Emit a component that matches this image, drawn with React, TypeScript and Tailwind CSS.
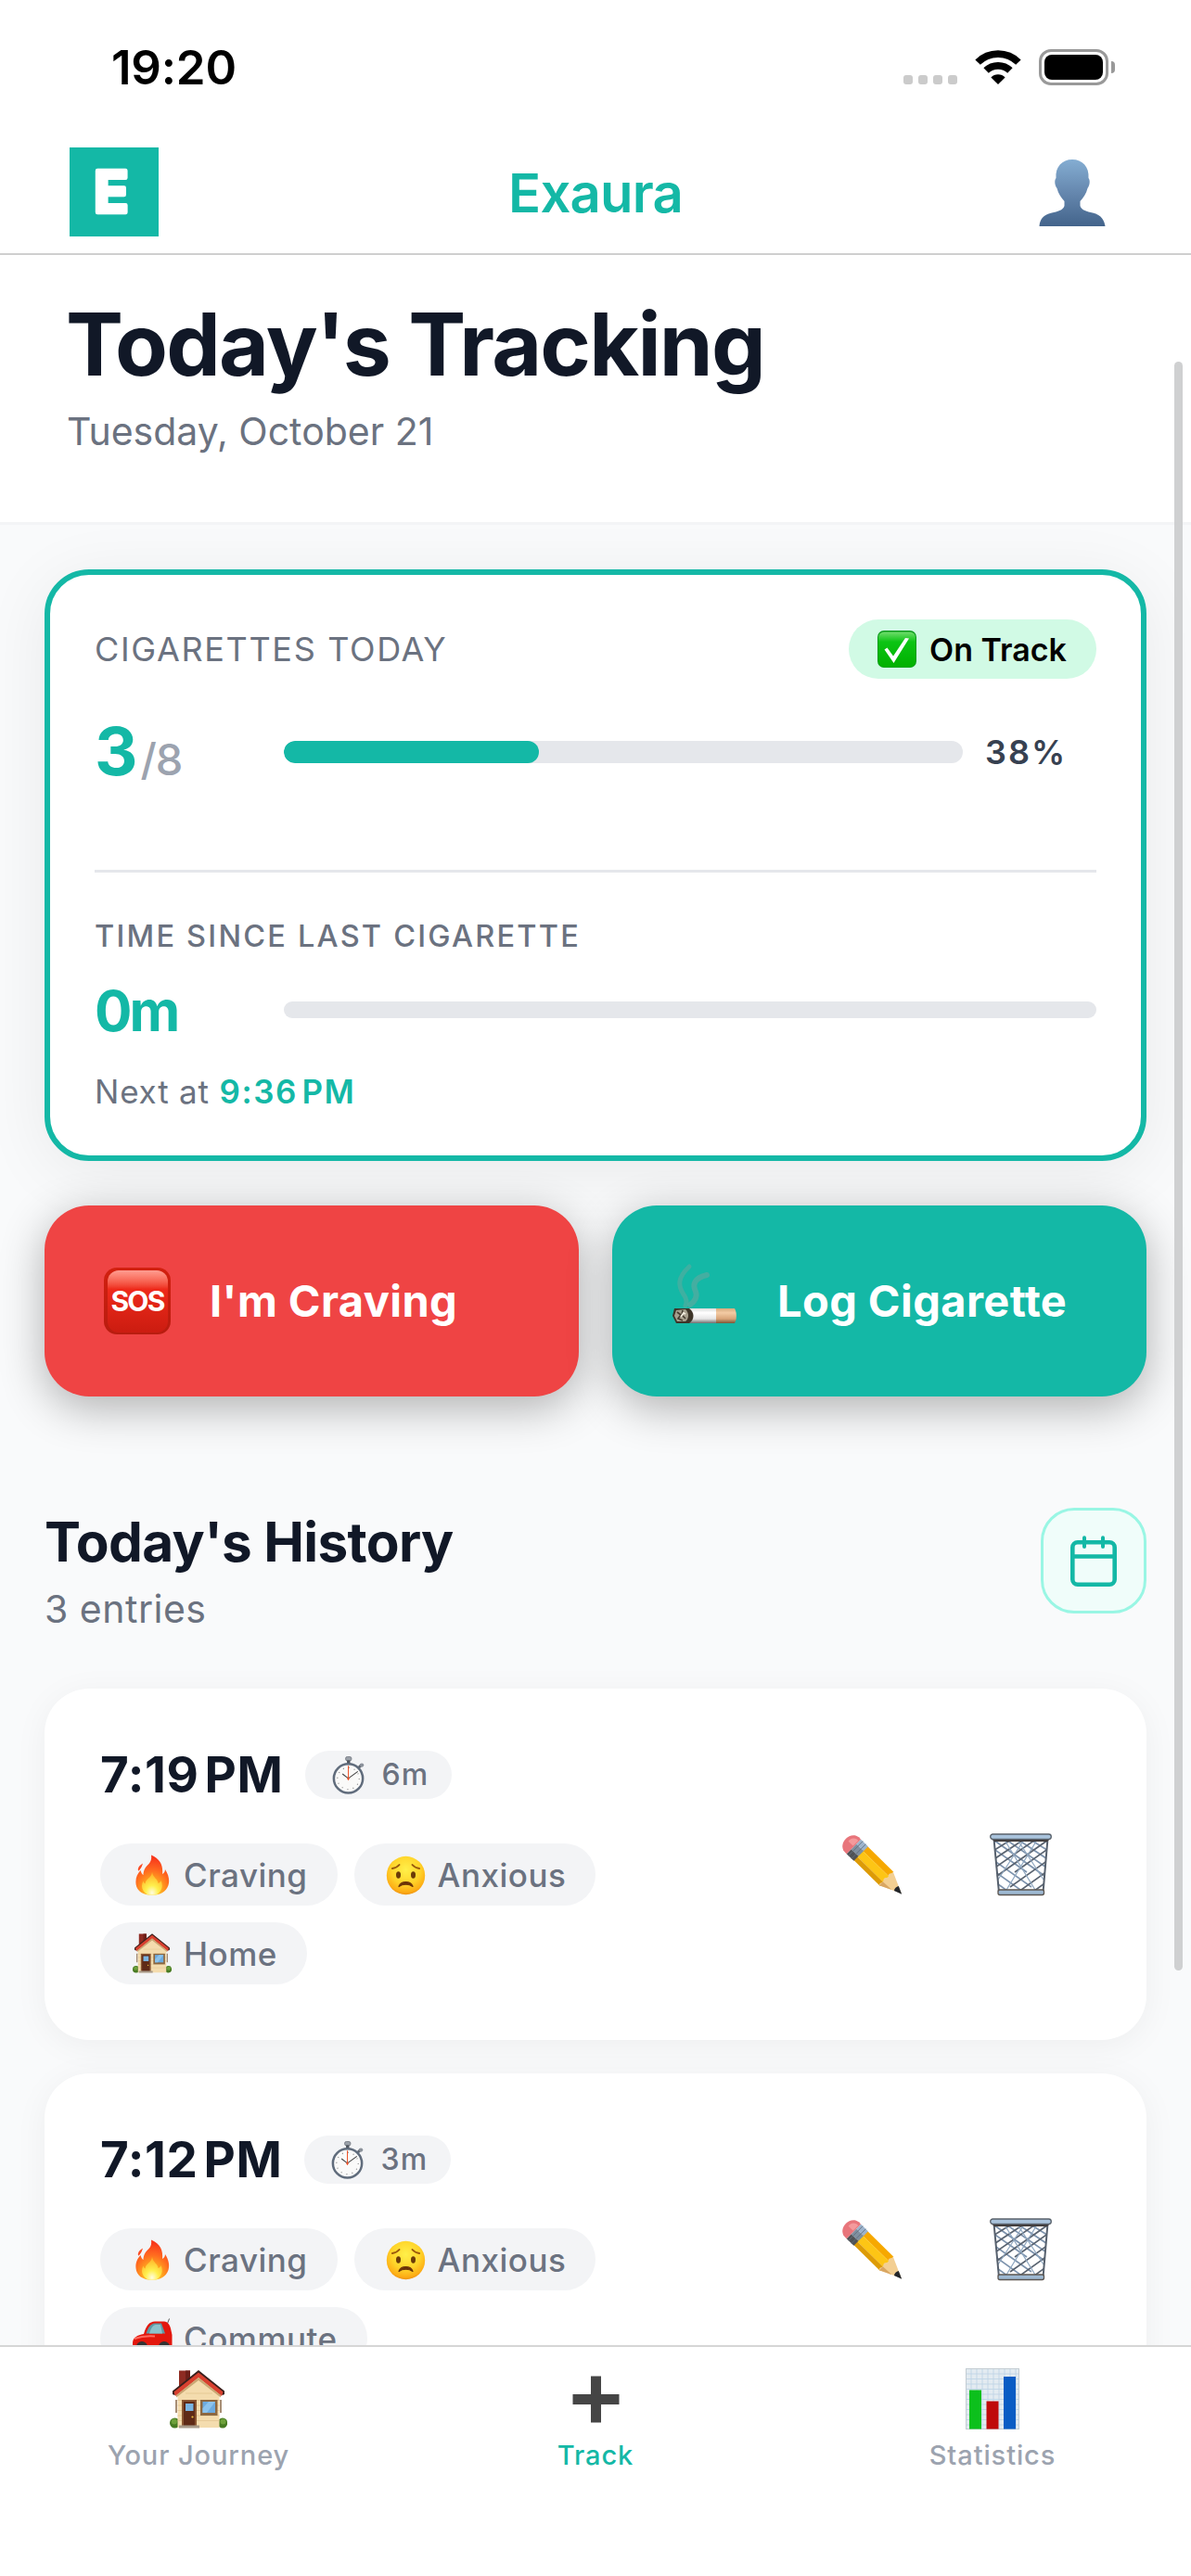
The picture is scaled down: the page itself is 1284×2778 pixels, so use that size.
import React from "react";

type IconProps = { className?: string };

function WifiIcon() {
  return (
    <svg viewBox="0 0 50 37" className="h-[37px] w-[50px]" fill="none" stroke="#000">
      <path d="M3.1 13.1A31 31 0 0 1 46.9 13.1" strokeWidth="7.7" />
      <path d="M12.1 22.1A18.3 18.3 0 0 1 37.9 22.1" strokeWidth="7.7" />
      <path d="M17.4 29.4A10.5 10.5 0 0 1 32.6 29.4L25 37Z" fill="#000" stroke="none" />
    </svg>
  );
}

function PersonIcon() {
  return (
    <svg viewBox="0 0 72 72" className="h-[72px] w-[72px]">
      <defs>
        <linearGradient id="person" x1="0" y1="0" x2="0" y2="1">
          <stop offset="0" stopColor="#84add2" />
          <stop offset="0.5" stopColor="#6587ae" />
          <stop offset="1" stopColor="#43648b" />
        </linearGradient>
      </defs>
      <path
        fill="url(#person)"
        d="M36 0C47 0 54.500 8 53.500 20C55.500 22 55 28 52.500 31C51 37 48 41 44.500 45L44.500 50C46 55 52 56 58 57.500C68 60 70.500 66 71.500 72L0.500 72C1 65 4 60 14 57.500C20 56 26 55 27.500 50L27.500 45C24 41 21 37 19.500 31C17 28 16.500 22 18.500 20C17.500 8 25 0 36 0Z"
      />
    </svg>
  );
}

function CheckIcon() {
  return (
    <svg viewBox="0 0 42 40" className="h-[40px] w-[42px]">
      <defs>
        <linearGradient id="check" x1="0" y1="0" x2="0" y2="1">
          <stop offset="0" stopColor="#6fdc6c" />
          <stop offset="0.28" stopColor="#0cc414" />
          <stop offset="1" stopColor="#00b000" />
        </linearGradient>
      </defs>
      <rect width="42" height="40" rx="7" fill="#0c9a1c" />
      <rect x="1" y="1.500" width="40" height="38" rx="6" fill="url(#check)" />
      <path d="M7.500 20.500L10.500 18.500L17 27.500L30 8L34 8.500L17.500 35Z" fill="#fff" />
    </svg>
  );
}

function SosIcon() {
  return (
    <span className="flex h-[72px] w-[72px] items-center justify-center rounded-[14px] bg-linear-to-b from-[#d2200f] to-[#b81c0f]">
      <span className="flex h-[67px] w-[65px] items-center justify-center rounded-[12px] bg-linear-to-b from-[#ff9c90] via-[#ee2a1b] via-30% to-[#cb1c10] text-[30px] leading-[40px] font-bold tracking-[-1.8px] text-white">
        SOS
      </span>
    </span>
  );
}

function CigaretteIcon() {
  return (
    <svg viewBox="0 0 72 72" className="h-[72px] w-[72px]">
      <defs>
        <linearGradient id="paper" x1="0" y1="0" x2="0" y2="1">
          <stop offset="0" stopColor="#dcdcdc" />
          <stop offset="0.3" stopColor="#ffffff" />
          <stop offset="0.7" stopColor="#e6e6e6" />
          <stop offset="1" stopColor="#6d6d6d" />
        </linearGradient>
        <linearGradient id="filter" x1="0" y1="0" x2="0" y2="1">
          <stop offset="0" stopColor="#d9a97c" />
          <stop offset="0.3" stopColor="#f3cba4" />
          <stop offset="0.7" stopColor="#d9a579" />
          <stop offset="1" stopColor="#7a5638" />
        </linearGradient>
      </defs>
      <g fill="none" stroke="#6aa89e" strokeLinecap="round" opacity="0.7">
        <path d="M19 6C6 18 7 27 13 36C16 40 17 44 15 48" strokeWidth="5" opacity="0.7" />
        <path d="M38 15C25 18 22 25 26 33C28 38 25 44 20 47" strokeWidth="6" opacity="0.8" />
      </g>
      <rect x="18" y="51" width="30" height="16" fill="url(#paper)" />
      <path d="M48 51H68C70.500 55 70.500 63 68 67H48Z" fill="url(#filter)" />
      <path d="M3 51L19 51C25 55 25 63 19 67L5 67L1 59Z" fill="#3d3428" />
      <path d="M5 53L15 52C19 56 19 62 15 65L6 65L3 59Z" fill="#a79f8e" />
      <path d="M6 55l4 3-3 4 5 2M12 53l-1 5 4 4" stroke="#453c30" strokeWidth="1.600" fill="none" />
      <path d="M10 60l3-4 2 1" stroke="#f3eee0" strokeWidth="1.800" fill="none" />
    </svg>
  );
}

function CalendarIcon() {
  return (
    <svg viewBox="0 0 50 55" className="h-[55px] w-[50px]" fill="none" stroke="#14b8a6" strokeWidth="4.600" strokeLinecap="round">
      <rect x="2.300" y="7.300" width="45.400" height="45.400" rx="5.500" />
      <path d="M15 2.300V12M35 2.300V12" strokeWidth="4" />
      <path d="M3 22.500H47" strokeLinecap="butt" />
    </svg>
  );
}

function StopwatchIcon() {
  return (
    <svg viewBox="0 0 36 42" className="h-[41px] w-[36px] shrink-0">
      <rect x="14.500" y="0.500" width="6.500" height="4.500" rx="1.800" fill="#9aa0a8" stroke="#6d737c" strokeWidth="0.800" />
      <rect x="16" y="4.500" width="3.500" height="4.500" fill="#4f555e" />
      <path d="M29 12.500L32.500 9" stroke="#5f6670" strokeWidth="3" />
      <circle cx="32.500" cy="9.800" r="2.200" fill="#8b929b" />
      <circle cx="17.500" cy="24.500" r="16" fill="#fafaf9" stroke="#606c7c" strokeWidth="2.600" />
      <circle cx="17.500" cy="24.500" r="12" fill="none" stroke="#8a8a8a" strokeWidth="1.300" strokeDasharray="1 5.280" />
      <path d="M17.500 24.500L11 19.500M17.500 24.500L28 16.800" stroke="#444" strokeWidth="1.100" />
      <path d="M17.500 10.500V26.500" stroke="#f0562c" strokeWidth="1.100" />
      <circle cx="17.500" cy="24.500" r="1.300" fill="#e8532b" />
    </svg>
  );
}

function FireIcon() {
  return (
    <svg viewBox="0 0 44 44" className="h-[44px] w-[44px]">
      <defs>
        <radialGradient id="fire" cx="0.5" cy="0.92" r="0.85">
          <stop offset="0" stopColor="#ffd93b" />
          <stop offset="0.35" stopColor="#ffa51f" />
          <stop offset="0.65" stopColor="#ff6a1f" />
          <stop offset="1" stopColor="#f8371c" />
        </radialGradient>
        <radialGradient id="flame" cx="0.5" cy="0.9" r="0.8">
          <stop offset="0" stopColor="#fffce0" />
          <stop offset="0.4" stopColor="#fff04d" />
          <stop offset="1" stopColor="#ffb52a" />
        </radialGradient>
      </defs>
      <path fill="url(#fire)" d="M21 0.500C31 5 34 12 33 21C35 20 36 18 36 16C40 22 41 28 39.500 33C37 40 31 43.800 22 43.800C12 43.800 5 39 4.500 31C4 25 6 21 9.500 17C10.500 20 11 21 12.500 22C12.500 17 15 13 18.500 10C21 7.500 21.500 4 21 0.500Z" />
      <path fill="#fa4a22" d="M12 9.500C11 12.500 10.500 14 8.500 16.500C7 18.500 6.800 17 6.800 15.500C7.500 12.500 9.500 11 12 9.500Z" />
      <path fill="url(#flame)" d="M22 19C23 25 28 26 28.500 31C30 30.500 31 29.500 31.500 28C34.500 34 32 40 27 43.200Q22 44.200 17 43.200C11 39.500 9.500 34 12.500 28.500C13 30.500 13.500 31 14.500 31.500C15 26 21.500 25 22 19Z" />
    </svg>
  );
}

function AnxiousIcon() {
  return (
    <svg viewBox="0 0 44 44" className="h-[44px] w-[44px]">
      <defs>
        <radialGradient id="face" cx="0.5" cy="0.35" r="0.68">
          <stop offset="0" stopColor="#fff04a" />
          <stop offset="0.55" stopColor="#ffd42a" />
          <stop offset="0.85" stopColor="#fdae16" />
          <stop offset="1" stopColor="#ea8a10" />
        </radialGradient>
      </defs>
      <circle cx="21.500" cy="22.500" r="20.700" fill="url(#face)" />
      <ellipse cx="13.500" cy="22" rx="2.500" ry="3.700" fill="#6b3b08" />
      <ellipse cx="29.500" cy="22" rx="2.500" ry="3.700" fill="#6b3b08" />
      <path d="M7 15C10 14.500 12.500 13.500 14.500 11M36 15C33 14.500 30.500 13.500 28.500 11" stroke="#9a5a0d" strokeWidth="2" strokeLinecap="round" fill="none" />
      <path d="M14 34.500C16 28 27 28 29 34.500C25 31.500 18 31.500 14 34.500Z" fill="#6b3408" stroke="#6b3408" strokeWidth="1.200" strokeLinejoin="round" />
    </svg>
  );
}

function HouseIcon({ className = "mx-px h-[43px] w-[42px]" }: IconProps) {
  return (
    <svg viewBox="0 0 62 63" className={className}>
      <ellipse cx="5.500" cy="57" rx="5.500" ry="5.500" fill="#477a22" />
      <ellipse cx="57" cy="57" rx="5.200" ry="5.500" fill="#477a22" />
      <ellipse cx="4.800" cy="55.500" rx="3" ry="3" fill="#6da03a" />
      <ellipse cx="57.500" cy="55.500" rx="3" ry="3" fill="#6da03a" />
      <path d="M10 0.500H22V16L10 25Z" fill="#8e2b22" />
      <path d="M17 0.500H22V14L17 18Z" fill="#6d1f19" />
      <path d="M8.500 25L31 5L53.500 25V62H8.500Z" fill="#f4dcae" />
      <path d="M8.500 32.500H53.500M8.500 38H53.500M8.500 43.500H53.500M8.500 49H53.500M8.500 54.500H53.500M17 25H46" stroke="#e2c591" strokeWidth="0.800" />
      <path d="M31 0L59 22.500V26L57 27L31 5.500L5 27L3 26V22.500Z" fill="#3a1f1c" />
      <path d="M31 2.500L57.500 23.500L56 28L31 8L6 28L4.500 23.500Z" fill="#d8402f" />
      <path d="M31 8L55 27V29.500L31 11L7 29.500V27Z" fill="#c9a774" />
      <rect x="13" y="32" width="16" height="28" fill="#8a5632" />
      <rect x="15" y="34" width="12" height="26" fill="#5f2a17" />
      <rect x="17" y="36" width="8.500" height="8" fill="#7ab4e2" />
      <circle cx="24.500" cy="50.500" r="1.100" fill="#f0c23e" />
      <rect x="33" y="32" width="18.500" height="17" fill="#8c6740" />
      <rect x="35.500" y="34" width="13.500" height="12" fill="#6cabe0" />
      <path d="M35.500 41L42 34H49L40 46H35.500Z" fill="#8cc3ec" />
      <path d="M7 32V46M55 32V46" stroke="#8a6a48" strokeWidth="1.500" />
      <rect x="10" y="59.500" width="22" height="3" fill="#a89a8a" />
    </svg>
  );
}

function CarIcon() {
  return (
    <svg viewBox="0 0 44 44" className="h-[44px] w-[44px]">
      <path d="M38 7L40.500 0.500" stroke="#555" strokeWidth="1" />
      <path d="M13 17C16 7 19 4 25 3.500H35C39 4 41 7 42 11L43.500 18V31H1V27C1 21 6 18 13 17Z" fill="#e3170d" />
      <path d="M15.500 16.500C18 9 20.500 6 25 5.500H32L36 16.500Z" fill="#5f9aa5" />
      <path d="M19 16.500C21 10 23 7.500 26 7L31 7L33 16.500Z" fill="#8cc2cc" />
      <path d="M3 22C10 19.500 18 19 25 19.500" stroke="#ff6a5e" strokeWidth="2" fill="none" />
      <circle cx="11" cy="31" r="6" fill="#333" />
      <circle cx="35" cy="31" r="6" fill="#333" />
    </svg>
  );
}

function PencilIcon() {
  return (
    <svg viewBox="0 0 64 64" className="h-[64px] w-[64px] overflow-visible">
      <g transform="translate(9.500 9.500) rotate(44.500)">
        <path d="M13 -10.500H54V-3.500H13Z" fill="#f6a800" />
        <path d="M13 -3.500H54V5H13Z" fill="#fdc515" />
        <path d="M13 5H54V10.500H13Z" fill="#dd9b06" />
        <path d="M53 -10.500L76 0L53 10.500C50 8 55 6 52 3C50 0 56 -2 52.500 -4C50.500 -7 55 -8 53 -10.500Z" fill="#f3cf92" />
        <path d="M53 5L66 4.500L53 10.500Z" fill="#d9a662" />
        <path d="M68.500 -3.500L77 0.300L68.500 3.500C67 1 67 -1 68.500 -3.500Z" fill="#23262a" />
        <rect x="4" y="-11" width="11" height="7" fill="#9db4cd" />
        <rect x="4" y="-4" width="11" height="8" fill="#7f8f9f" />
        <rect x="4" y="4" width="11" height="7" fill="#4f5255" />
        <path d="M7 -11V11M11.500 -11V11" stroke="#5f6e7d" strokeWidth="0.800" />
        <path d="M4 -11H1C-5 -10.500 -8 -5 -8 0C-8 5 -5 10.500 1 11H4Z" fill="#e8757b" />
        <path d="M3 -8H1C-3 -7 -5 -3 -4 0H3Z" fill="#f49a9c" />
      </g>
    </svg>
  );
}

function TrashIcon() {
  return (
    <svg viewBox="0 0 67 68" className="h-[68px] w-[67px]">
      <defs>
        <clipPath id="basket">
          <path d="M4 5H63L58 65H9.500Z" />
        </clipPath>
      </defs>
      <g clipPath="url(#basket)" fill="none" strokeWidth="1.700">
        <path stroke="#7d93ad" d="M-20 0L40 42M-9 -2L62 48M-20 12L45 58M-20 23L40 66M2 -4L70 43M14 -4L70 33M26 -4L70 23M38 -4L70 13M-20 34L30 70" />
        <path stroke="#5a6471" d="M87 0L27 42M76 -2L5 48M87 12L22 58M87 23L27 66M65 -4L-3 43M53 -4L-3 33M41 -4L-3 23M29 -4L-3 13M87 34L37 70" />
        <path stroke="#8fa7c0" strokeWidth="1.200" d="M14 4L52 66M28 4L58 50M53 4L15 66M39 4L9 50" />
      </g>
      <path d="M4.500 6L10 64M62.500 6L57.500 64" stroke="#56606d" strokeWidth="2" />
      <rect x="9" y="61" width="49.500" height="5.500" rx="2" fill="#9db8d2" stroke="#5b5550" strokeWidth="1.300" />
      <path d="M3 7H64L62 9H5Z" fill="#3f3a38" />
      <rect x="0.700" y="1" width="65.600" height="5.500" rx="2.700" fill="#a9c3dc" stroke="#59616b" strokeWidth="1.300" />
    </svg>
  );
}

function PlusIcon() {
  return (
    <svg viewBox="0 0 51 51" className="h-[51px] w-[51px]">
      <path d="M20 0.500H31V20H50.500V31H31V50.500H20V31H0.500V20H20Z" fill="#454545" />
    </svg>
  );
}

function ChartIcon() {
  return (
    <svg viewBox="0 0 58 66" className="h-[66px] w-[58px]">
      <rect x="0.500" y="0.500" width="57" height="65" fill="#e3ebf1" stroke="#c3ccd2" />
      <path
        d="M1 6H57M1 11.500H57M1 17H57M1 22.500H57M1 28H57M1 33.500H57M1 39H57M1 44.500H57M1 50H57M1 55.500H57M1 61H57M6 1V65M12 1V65M18 1V65M24 1V65M30 1V65M36 1V65M42 1V65M48 1V65M54 1V65"
        stroke="#bfd5e6"
        strokeWidth="0.900"
      />
      <rect x="4" y="23.500" width="13" height="42" fill="#0cc01c" />
      <rect x="22.500" y="35.500" width="13" height="30" fill="#bf0a0a" />
      <rect x="41" y="9" width="13" height="56.500" fill="#0a5cc4" />
    </svg>
  );
}

const tagIcons: Record<string, () => React.JSX.Element> = {
  Craving: FireIcon,
  Anxious: AnxiousIcon,
  Home: () => <HouseIcon />,
  Commute: CarIcon,
};

function Entry({ time, wait, tags }: { time: string; wait: string; tags: string[] }) {
  return (
    <article className="flex h-[379px] shrink-0 items-center justify-between rounded-[48px] bg-white pr-[102px] pl-[60px] shadow-[0_6px_36px_rgba(0,0,0,0.05)]">
      <div className="flex h-full w-[560px] flex-col pt-[67px]">
        <div className="flex h-[52px] items-center gap-[24px]">
          <span className="text-[53px] leading-[60px] font-bold tracking-[0.6px] text-[#111827] [word-spacing:-7px]">{time}</span>
          <span className="flex h-[52px] items-center gap-[17px] rounded-full bg-[#f3f4f6] pr-[25px] pl-[29px] text-[32px] font-medium tracking-[1.2px] text-[#6b7280]">
            <StopwatchIcon />
            {wait}
          </span>
        </div>
        <div className="mt-[48px] flex flex-wrap gap-[18px]">
          {tags.map((tag) => {
            const Icon = tagIcons[tag];
            return (
              <span key={tag} className="flex h-[67px] items-center gap-[12px] rounded-full bg-[#f3f4f6] pr-[32px] pl-[34px] text-[35px] leading-[48px] font-medium tracking-[0.5px] text-[#6b7280]">
                <Icon />
                {tag}
              </span>
            );
          })}
        </div>
      </div>
      <div className="flex items-center gap-[95px]">
        <PencilIcon />
        <TrashIcon />
      </div>
    </article>
  );
}

function Tab({ label, active, children }: { label: string; active?: boolean; children: React.ReactNode }) {
  return (
    <div className="flex flex-col items-center pt-[22px]">
      <div className="flex h-[68px] items-center justify-center">{children}</div>
      <span className={`mt-[7px] text-[29px] leading-[40px] font-medium tracking-[0.9px] ${active ? "text-[#14b8a6]" : "text-[#9ca3af]"}`}>{label}</span>
    </div>
  );
}

export default function App() {
  return (
    <div className="relative flex h-[2778px] w-[1284px] flex-col overflow-hidden bg-white font-[Inter,sans-serif]">
      <div className="flex h-[141px] shrink-0 items-center justify-between pt-[4px] pr-[82px] pl-[120px]">
        <span className="pt-[2px] text-[51px] font-semibold tracking-[-0.2px] text-black">19:20</span>
        <div className="flex items-center">
          <div className="mt-[27px] mr-[19px] flex gap-[6px]">
            {[0, 1, 2, 3].map((n) => (
              <span key={n} className="h-[10px] w-[10px] rounded-[3px] bg-[#cbcbcb]" />
            ))}
          </div>
          <WifiIcon />
          <div className="ml-[19px] h-[39px] w-[75px] rounded-[13px] border-[3px] border-[#999] p-[3px]">
            <div className="h-full rounded-[8px] bg-black" />
          </div>
          <span className="ml-[3px] h-[13px] w-[4px] rounded-r-full bg-[#999]" />
        </div>
      </div>

      <header className="grid h-[134px] shrink-0 grid-cols-3 items-center border-b-2 border-[#cfcfcf]">
        <div className="pl-[75px]">
          <svg viewBox="0 0 96 96" className="h-24 w-24 bg-[#14b8a6]">
            <text x="26" y="70" fontFamily="Inter" fontWeight="700" fontSize="62" fill="#fff" stroke="#fff" strokeWidth="4.500" strokeLinejoin="round">
              E
            </text>
          </svg>
        </div>
        <span className="pt-[2px] text-center text-[58px] leading-[70px] font-semibold tracking-[-0.8px] text-[#14b8a6]">Exaura</span>
        <div className="flex justify-end pt-[1px] pr-[92px]">
          <PersonIcon />
        </div>
      </header>

      <section className="h-[291px] shrink-0 border-b-[3px] border-[#f3f4f6] pt-[40px] pl-[71px]">
        <h1 className="text-[93px] leading-[113px] font-bold tracking-[-1.8px] text-[#111827]">Today&#39;s Tracking</h1>
        <p className="mt-[7px] pl-[1px] text-[41px] leading-[61px] text-[#6b7280]">Tuesday, October 21</p>
      </section>

      <main className="flex min-h-0 flex-1 flex-col overflow-hidden bg-[#f9fafb] px-12 pt-12">
        <section className="h-[638px] shrink-0 rounded-[48px] border-[6px] border-[#14b8a6] bg-white px-12 pt-12 shadow-[0_12px_72px_rgba(0,0,0,0.07)]">
          <div className="flex h-16 items-center justify-between">
            <span className="text-[36px] tracking-[1.65px] text-[#6b7280]">CIGARETTES TODAY</span>
            <span className="flex h-16 w-[267px] items-center gap-[14px] rounded-full bg-[#d1fae5] pl-[31px] text-[34px] font-semibold whitespace-nowrap text-black">
              <CheckIcon />
              On Track
            </span>
          </div>
          <div className="mt-[37px] flex h-[84px] items-center">
            <div className="flex w-[204px] items-baseline">
              <span className="text-[72px] leading-[84px] font-bold text-[#14b8a6]">3</span>
              <span className="ml-[3px] text-[47px] font-medium tracking-[-1px] text-[#9ca3af]">/8</span>
            </div>
            <div className="h-6 w-[732px] overflow-hidden rounded-full bg-[#e5e7eb]">
              <div className="h-full rounded-full bg-[#14b8a6]" style={{ width: `${(3 / 8) * 100}%` }} />
            </div>
            <span className="ml-[24px] text-[36px] font-semibold tracking-[2px] text-[#374151]">38%</span>
          </div>
          <div className="mt-[85px] h-[3px] bg-[#e5e7eb]" />
          <p className="mt-[49px] text-[32.5px] leading-[40px] font-medium tracking-[2.22px] text-[#6b7280]">TIME SINCE LAST CIGARETTE</p>
          <div className="mt-[24px] flex h-[72px] items-center">
            <span className="w-[204px] text-[60px] leading-[72px] font-bold tracking-[-3px] text-[#14b8a6]">0m</span>
            <div className="-mt-[2px] h-[18px] flex-1 rounded-full bg-[#e5e7eb]" />
          </div>
          <p className="mt-[29px] text-[35px] leading-[44px] tracking-[0.8px] text-[#6b7280]">
            Next at <span className="font-semibold tracking-[1.6px] text-[#14b8a6] [word-spacing:-6px]">9:36 PM</span>
          </p>
        </section>

        <div className="mt-12 grid h-[206px] shrink-0 grid-cols-2 gap-9 text-[47px] font-bold tracking-[0.4px] text-white">
          <button className="flex items-center gap-[42px] rounded-[48px] bg-[#ef4444] pl-[64px] shadow-[0_12px_48px_rgba(0,0,0,0.3)]">
            <SosIcon />
            I&#39;m Craving
          </button>
          <button className="flex items-center gap-[42px] rounded-[48px] bg-[#14b8a6] pl-[64px] shadow-[0_12px_48px_rgba(0,0,0,0.3)]">
            <span className="-mt-[14px]">
              <CigaretteIcon />
            </span>
            Log Cigarette
          </button>
        </div>

        <div className="mt-[120px] flex h-[195px] shrink-0 items-start justify-between">
          <div>
            <h2 className="text-[58.5px] leading-[74px] font-bold tracking-[-0.65px] text-[#111827]">Today&#39;s History</h2>
            <p className="mt-[9px] text-[41px] leading-[52px] tracking-[0.5px] text-[#6b7280]">3 entries</p>
          </div>
          <button className="flex h-[114px] w-[114px] items-center justify-center rounded-[36px] border-[3px] border-[#99f6e4] bg-[#f0fdfa]">
            <CalendarIcon />
          </button>
        </div>

        <div className="flex flex-col gap-9">
          <Entry time="7:19 PM" wait="6m" tags={["Craving", "Anxious", "Home"]} />
          <Entry time="7:12 PM" wait="3m" tags={["Craving", "Anxious", "Commute"]} />
        </div>
      </main>

      <nav className="grid h-[249px] shrink-0 grid-cols-3 border-t-2 border-[#d6d6d6] bg-white">
        <Tab label="Your Journey">
          <HouseIcon className="h-[63px] w-[62px]" />
        </Tab>
        <Tab label="Track" active>
          <PlusIcon />
        </Tab>
        <Tab label="Statistics">
          <ChartIcon />
        </Tab>
      </nav>

      <div className="absolute top-[390px] right-[9px] h-[1735px] w-[9px] rounded-full bg-[#cfd0d1]" />
    </div>
  );
}
